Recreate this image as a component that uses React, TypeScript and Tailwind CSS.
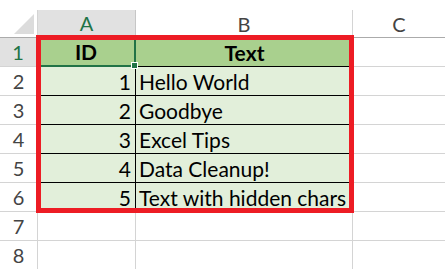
import React from "react";

const rows = [
  { n: 2, id: "1", t: "Hello World" },
  { n: 3, id: "2", t: "Goodbye" },
  { n: 4, id: "3", t: "Excel Tips" },
  { n: 5, id: "4", t: "Data Cleanup!" },
  { n: 6, id: "5", t: "Text with hidden chars" },
];

export default function App() {
  return (
    <div
      className="relative w-[445px] h-[269px] overflow-hidden bg-white text-[21px] leading-none"
      style={{ fontFamily: "Lato, 'Open Sans', sans-serif" }}
    >
      <div className="h-[10px]" />
      {/* column header row */}
      <div className="flex h-[28px] border-b border-[#ababab] text-[20px]">
        <div className="w-[38px] shrink-0 relative bg-white border-r border-[#d4d4d4]">
          <svg className="absolute left-[14px] top-[4px]" width="20" height="20" viewBox="0 0 20 20">
            <polygon points="20,0 20,20 0,20" fill="#dcdcdc" />
          </svg>
        </div>
        <div className="w-[98px] shrink-0 flex items-center justify-center bg-[#e1e1e1] border-r border-[#c6c6c6] text-[#217346] border-b-2 border-b-[#217346]">
          A
        </div>
        <div className="w-[217px] shrink-0 flex items-center justify-center border-r border-[#d4d4d4] text-[#444]">
          B
        </div>
        <div className="w-[92px] shrink-0 flex items-center justify-center text-[#444]">
          C
        </div>
      </div>
      {/* row 1 */}
      <div className="flex h-[29px]">
        <div className="w-[38px] shrink-0 flex items-center justify-center bg-[#e1e1e1] border-r-2 border-[#217346] text-[#217346] text-[20px] border-b border-b-[#d4d4d4]">
          1
        </div>
        <div className="w-[98px] shrink-0 flex items-center justify-center bg-[#a9d08e] font-bold text-black border-r-2 border-b-2 border-[#217346]">
          ID
        </div>
        <div className="w-[217px] shrink-0 flex items-center justify-center bg-[#a9d08e] font-bold text-black border-b border-black">
          Text
        </div>
        <div className="w-[92px] shrink-0 border-b border-[#d4d4d4]" />
      </div>
      {rows.map((r) => (
        <div key={r.n} className="flex h-[29px]">
          <div className="w-[38px] shrink-0 flex items-center justify-center border-r border-b border-[#d4d4d4] text-[#444] text-[20px]">
            {r.n}
          </div>
          <div className="w-[98px] shrink-0 flex items-center justify-end pr-[4px] bg-[#e2efda] text-black border-r border-b border-black">
            {r.id}
          </div>
          <div className="w-[217px] shrink-0 flex items-center pl-[3px] bg-[#e2efda] text-black border-b border-black whitespace-nowrap">
            {r.t}
          </div>
          <div className="w-[92px] shrink-0 border-b border-[#d4d4d4]" />
        </div>
      ))}
      {[7, 8].map((n) => (
        <div key={n} className="flex h-[29px]">
          <div className="w-[38px] shrink-0 flex items-center justify-center border-r border-b border-[#d4d4d4] text-[#444] text-[20px]">
            {n}
          </div>
          <div className="w-[98px] shrink-0 border-r border-b border-[#d4d4d4]" />
          <div className="w-[217px] shrink-0 border-r border-b border-[#d4d4d4]" />
          <div className="w-[92px] shrink-0 border-b border-[#d4d4d4]" />
        </div>
      ))}
      {/* selection handle */}
      <div className="absolute left-[131px] top-[62px] w-[7px] h-[7px] bg-[#217346] border border-white" />
      {/* red highlight box */}
      <div className="absolute left-[36px] top-[35px] w-[318px] h-[178px] border-[5px] border-[#ed1c24] pointer-events-none" />
    </div>
  );
}
